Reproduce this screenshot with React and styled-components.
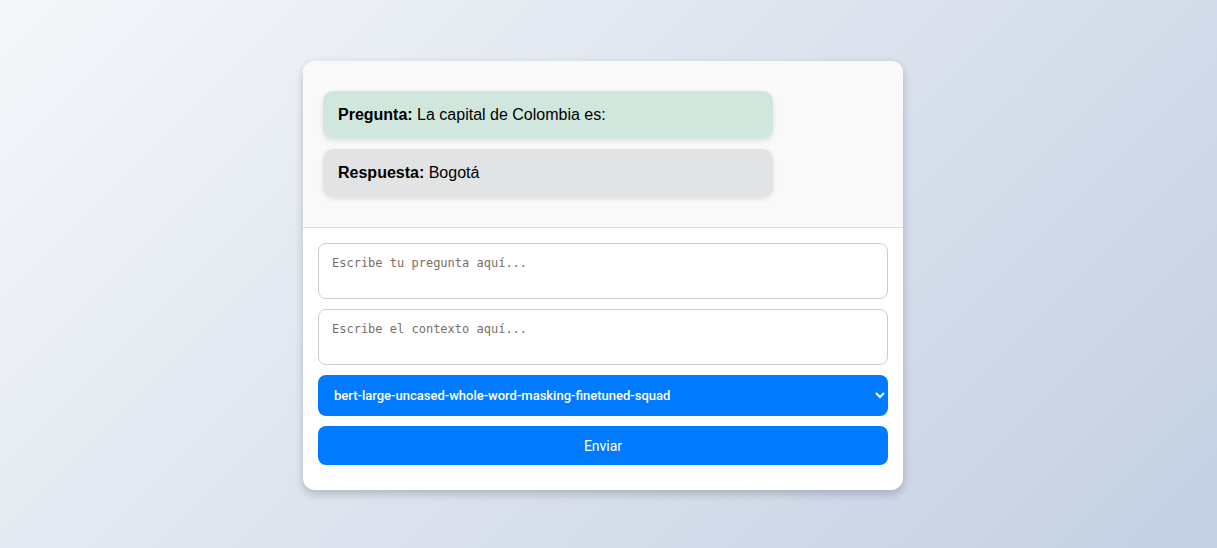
import React, { useState } from "react";
import styled, { createGlobalStyle } from "styled-components";

const GlobalStyle = createGlobalStyle`
  html, body {
    margin: 0;
    padding: 0;
  }
  body {
    font-family: "Liberation Sans", Arial, sans-serif;
    background: linear-gradient(135deg, #f5f7fa 0%, #c3cfe2 100%);
    min-height: 100vh;
  }
`;

const Page = styled.div`
  min-height: 100vh;
  display: flex;
  justify-content: center;
  align-items: center;
  padding-right: 11px;
  padding-top: 3px;
  box-sizing: border-box;
`;

const Card = styled.div`
  width: 600px;
  background: #fff;
  border-radius: 12px;
  box-shadow: 0 4px 10px rgba(0, 0, 0, 0.2);
  overflow: hidden;
`;

const ChatBox = styled.div`
  background: #f9f9f9;
  padding: 20px;
  border-bottom: 1px solid #ddd;
`;

const Message = styled.div`
  width: 450px;
  box-sizing: border-box;
  margin: 10px 0;
  padding: 15px;
  border-radius: 10px;
  font-size: 16px;
  line-height: 18px;
  color: #000;
  background: ${({ kind }) => (kind === "question" ? "#d1e7dd" : "#e2e3e5")};
  box-shadow: 0 2px 5px rgba(0, 0, 0, 0.1);
`;

const Form = styled.form`
  display: flex;
  flex-direction: column;
  gap: 10px;
  padding: 15px 15px 25px;
`;

const TextArea = styled.textarea`
  height: 56px;
  padding: 12px 13px;
  border: 1px solid #ccc;
  border-radius: 8px;
  font-family: "DejaVu Sans Mono", "Liberation Mono", monospace;
  font-size: 12px;
  line-height: 15px;
  resize: none;
  box-sizing: border-box;
  outline: none;

  &::placeholder {
    color: #7a6e66;
  }
`;

const Select = styled.select`
  height: 41px;
  padding: 0 10px 0 12px;
  border: none;
  border-radius: 8px;
  background: #007bff;
  color: #fff;
  font-family: Roboto, "Liberation Sans", Arial, sans-serif;
  font-size: 13px;
  font-weight: 500;
  outline: none;
`;

const Button = styled.button`
  height: 39px;
  border: none;
  border-radius: 8px;
  background: #007bff;
  color: #fff;
  font-family: Roboto, "Liberation Sans", Arial, sans-serif;
  font-size: 14px;
  cursor: pointer;
`;

export default function App() {
  const [model, setModel] = useState("bert-large-uncased-whole-word-masking-finetuned-squad");

  return (
    <>
      <GlobalStyle />
      <Page>
        <Card>
          <ChatBox>
            <Message kind="question">
              <strong>Pregunta:</strong> La capital de Colombia es:
            </Message>
            <Message kind="answer">
              <strong>Respuesta:</strong> Bogotá
            </Message>
          </ChatBox>
          <Form onSubmit={(e) => e.preventDefault()}>
            <TextArea placeholder="Escribe tu pregunta aquí..." />
            <TextArea placeholder="Escribe el contexto aquí..." />
            <Select value={model} onChange={(e) => setModel(e.target.value)}>
              <option>bert-large-uncased-whole-word-masking-finetuned-squad</option>
              <option>distilbert-base-cased-distilled-squad</option>
            </Select>
            <Button type="submit">Enviar</Button>
          </Form>
        </Card>
      </Page>
    </>
  );
}
